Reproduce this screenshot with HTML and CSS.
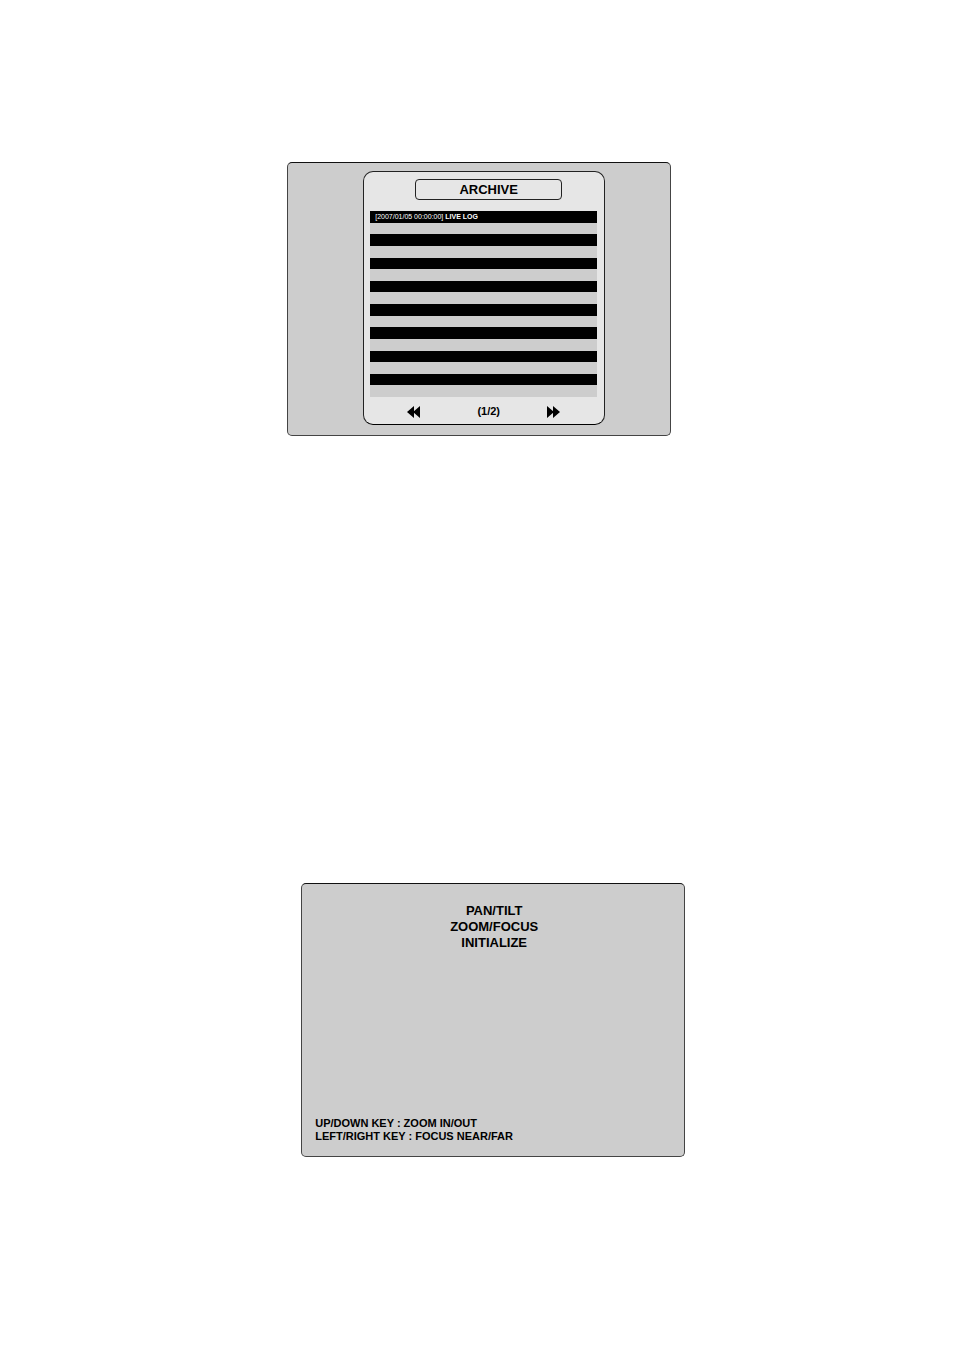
FILE: index.html
```
<!DOCTYPE html>
<html lang="en">
<head>
<meta charset="UTF-8">
<meta name="viewport" content="width=device-width, initial-scale=1.0">
<title>Archive</title>
<link rel="stylesheet" href="styles.css">
</head>
<body>

<main class="page">
    <section class="screen archive">
        <div class="panel">
            <h1 class="title">ARCHIVE</h1>
            <ol class="log">
                <li><time>[2007/01/05 00:00:00]</time> LIVE LOG</li>
                <li></li>
                <li></li>
                <li></li>
                <li></li>
                <li></li>
                <li></li>
                <li></li>
                <li></li>
                <li></li>
                <li></li>
                <li></li>
                <li></li>
                <li></li>
                <li></li>
                <li></li>
            </ol>
            <div class="pager">
                <button type="button" aria-label="Previous page">
                    <svg width="13" height="12" viewBox="0 0 13 12"><path d="M7 0v12L0 6zM13 0v12L6 6z"/></svg>
                </button>
                <span class="count">(1/2)</span>
                <button type="button" aria-label="Next page">
                    <svg width="13" height="12" viewBox="0 0 13 12"><path d="M0 0v12l7-6zM6 0v12l7-6z"/></svg>
                </button>
            </div>
        </div>
    </section>

    <section class="screen lens">
        <ul class="menu">
            <li>PAN/TILT</li>
            <li>ZOOM/FOCUS</li>
            <li>INITIALIZE</li>
        </ul>
        <div class="keys">
            <p>UP/DOWN KEY : ZOOM IN/OUT</p>
            <p>LEFT/RIGHT KEY : FOCUS NEAR/FAR</p>
        </div>
    </section>
</main>

</body>
</html>
```
FILE: styles.css
```
* {
    box-sizing: border-box;
}
body {
    margin: 0;
    background-color: #fff;
    color: #000;
    font-family: "Liberation Sans", Arial, sans-serif;
    font-weight: bold;
}
h1, p, ol, ul {
    margin: 0;
    padding: 0;
    list-style: none;
}
.page {
    display: flex;
    flex-direction: column;
    gap: 447px;
    padding: 162px 16px 194px calc(30% + 1px);
}
.screen {
    display: flex;
    flex-direction: column;
    width: 100%;
    max-width: 384px;
    min-height: 274px;
    border: 1px solid #444;
    border-top-color: #111;
    border-radius: 5px;
    background-color: #cdcdcd;
}
.archive {
    padding: 8px 65px 10px 75px;
}
.lens {
    justify-content: space-between;
    margin-left: 14px;
    padding: 19px 13px 13px;
}

/* Archive panel */
.panel {
    flex: 1;
    padding: 7px 7px 4px 6px;
    border: 1px solid #222;
    border-bottom-color: #000;
    border-radius: 10px;
    background-color: #e6e6e6;
}
.title {
    margin: 0 35px 11px 45px;
    border: 1px solid #222;
    border-radius: 4px;
    font-size: 13px;
    line-height: 19px;
    text-align: center;
}
.log {
    display: grid;
    grid-template-rows: repeat(16, 1fr);
    height: 186px;
}
.log li {
    padding-left: 5px;
    background-color: #cdcdcd;
    color: #fff;
    font-size: 7px;
    line-height: 11px;
}
.log li:nth-child(odd) {
    background-color: #000;
}
.log time {
    font-weight: normal;
}
.pager {
    display: flex;
    align-items: center;
    justify-content: space-between;
    padding: 7px 37px 0 37px;
}
.pager button {
    padding: 1px 0 0;
    border: 0;
    background: none;
}
.pager svg {
    display: block;
}
.count {
    padding-left: 10px;
    font-size: 11px;
    line-height: 15px;
}

/* Pan/tilt and zoom menu */
.menu {
    padding-left: 2px;
    font-size: 13px;
    line-height: 16px;
    text-align: center;
}
.keys {
    font-size: 11px;
    line-height: 13px;
}
```
